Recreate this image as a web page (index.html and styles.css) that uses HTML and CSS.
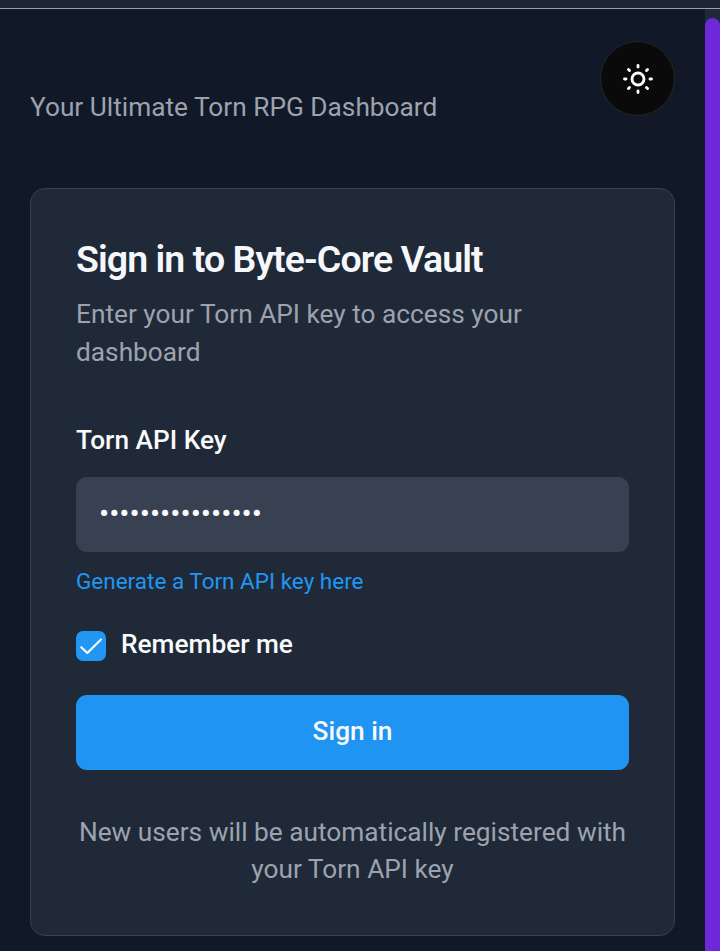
FILE: index.html
```html
<!DOCTYPE html>
<html lang="en">
<head>
<meta charset="utf-8">
<title>Byte-Core Vault</title>
<link rel="stylesheet" href="styles.css">
</head>
<body>
<div class="topline"></div>
<div class="viewport">
  <main class="page">
    <header class="header">
      <p class="tagline">Your Ultimate Torn RPG Dashboard</p>
      <button class="theme" aria-label="Toggle theme">
        <svg width="36" height="36" viewBox="0 0 24 24" fill="none" stroke="currentColor" stroke-width="1.9" stroke-linecap="round"><circle cx="12" cy="12" r="4"/><path d="M12 3v1M12 20v1M3 12h1M20 12h1M18.364 5.636l-.707.707M6.343 17.657l-.707.707M5.636 5.636l.707.707M17.657 17.657l.707.707"/></svg>
      </button>
    </header>
    <form class="card">
      <h1 class="title">Sign in to Byte-Core Vault</h1>
      <p class="desc">Enter your Torn API key to access your dashboard</p>
      <label class="label">Torn API Key</label>
      <div class="field"><span class="dots">••••••••••••••••</span></div>
      <a class="link">Generate a Torn API key here</a>
      <div class="remember">
        <span class="check"><svg width="30" height="30" viewBox="0 0 30 30" fill="none" stroke="#fff" stroke-width="2.1" stroke-linecap="round" stroke-linejoin="round"><path d="M5.3 16.3l6 5.7L25 8.5"/></svg></span>
        <span>Remember me</span>
      </div>
      <button class="submit" type="button">Sign in</button>
      <p class="note">New users will be automatically registered with your Torn API key</p>
    </form>
  </main>
  <div class="track"><div class="thumb"></div></div>
</div>
</body>
</html>
```
FILE: styles.css
```css
* { box-sizing: border-box; margin: 0; }
body { height: 951px; overflow: hidden; background: #111827; color: #f9fafb; font-family: Roboto, sans-serif; font-size: 26.25px; line-height: 37.5px; }
.topline { height: 9px; background: #1f2535; border-bottom: 1px solid #99a0a9; }
.viewport { display: flex; height: 942px; }
.page { flex: 1; padding: 32px 30px 0; }
.header { display: flex; justify-content: space-between; height: 147px; }
.tagline { margin-top: 48px; color: #9ca3af; }
.theme { display: flex; align-items: center; justify-content: center; width: 75px; height: 75px; padding: 0; border: 1px solid #262626; border-radius: 50%; background: #0a0a0a; color: #fafafa; }
.card { height: 748px; padding: 45px; border: 1px solid #374151; border-radius: 15px; background: #202937; }
.title { margin-top: 5px; color: #f5f7fb; font-size: 37.5px; line-height: 40px; font-weight: 600; letter-spacing: -0.94px; }
.desc { margin-top: 17px; color: #9ca3af; }
.label { display: block; margin-top: 51px; font-weight: 500; }
.field { display: flex; align-items: center; height: 75px; margin-top: 17px; padding: 0 23px; border-radius: 11px; background: #384151; }
.dots { font-size: 30.2px; }
.link { display: block; margin-top: 14px; color: #2196f3; font-size: 22.5px; line-height: 30px; }
.remember { display: flex; gap: 15px; height: 37px; margin-top: 30px; font-weight: 500; }
.check { width: 30px; height: 30px; margin-top: 5px; border-radius: 7px; background: #2196f3; }
.check svg { display: block; }
.submit { display: block; width: 100%; height: 75px; margin-top: 32px; padding: 0 0 2px; border: 0; border-radius: 11px; background: #2094f3; color: #f9fafb; font: 500 26.25px Roboto, sans-serif; }
.note { margin-top: 44px; color: #9ca3af; text-align: center; }
.track { width: 15px; background: #1f2937; padding-top: 9px; }
.thumb { height: 950px; border-radius: 8px; background: #6d28d9; }
```
